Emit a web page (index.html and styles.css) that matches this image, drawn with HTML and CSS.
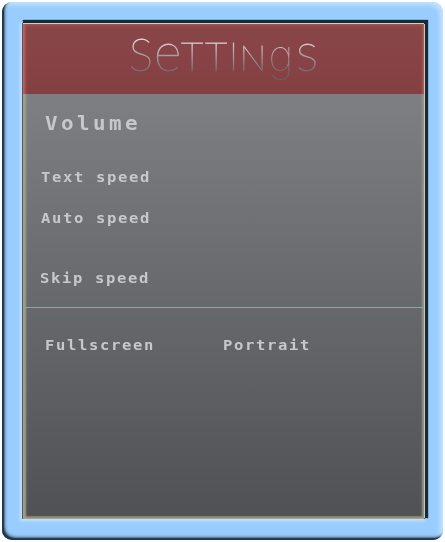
FILE: index.html
```html
<!DOCTYPE html>
<html lang="en">
<head>
<meta charset="utf-8">
<title>Settings</title>
<link rel="stylesheet" href="styles.css">
</head>
<body>
<main class="frame">
  <section class="panel">
    <header class="header">
      <h1 class="title" aria-label="Settings"><span class="glyph cap">S</span><span class="glyph tall">e</span><span class="glyph small">T</span><span class="glyph small">T</span><span class="glyph stem">I</span><span class="glyph small">N</span><span class="glyph tail">g</span><span class="glyph ess">s</span></h1>
    </header>
    <div class="sliders">
      <h2 class="volume">Volume</h2>
      <p class="label text-speed">Text speed</p>
      <p class="label auto-speed">Auto speed</p>
      <p class="label skip-speed">Skip speed</p>
    </div>
    <div class="modes">
      <p class="label">Fullscreen</p>
      <p class="label">Portrait</p>
    </div>
  </section>
</main>
</body>
</html>
```

FILE: styles.css
```css
* { box-sizing: border-box; }
body { margin: 0; background: #fff; overflow: hidden; }
h1, h2, p { margin: 0; }

.frame {
  width: 441px;
  height: 538px;
  margin: 2px;
  padding: 22px 19px 21px 21px;
  border-radius: 10px;
  background: #99ccff;
  box-shadow:
    inset 2px -2px 1px #203849,
    inset 3px -3px 3px #49677f,
    inset -3px 3px 4px #c4e2ff;
}

.panel {
  display: flex;
  flex-direction: column;
  width: 401px;
  height: 494px;
  background: linear-gradient(#86888b 0, #7e7f83 70px, #505154 100%);
  box-shadow:
    inset 3px 0 2px #a09f88,
    inset -2px 0 2px #96958a,
    inset 0 -2px 1px #85826a,
    0 -1px 0 #d0cfbc,
    1px 0 0 #c9c8b3,
    0 1px 0 #aaa685,
    2px -2px 1px 2px #162a37,
    0 0 0 1px #536777,
    -1px 1px 3px 2px #c5e1fb;
}

.header {
  height: 70px;
  background:
    linear-gradient(90deg, #cf6257, transparent 4px, transparent 398px, #b65d5a),
    linear-gradient(#a8504f, #894648 3px, #843f41);
}

.title {
  display: flex;
  align-items: baseline;
  height: 61px;
  width: 210px;
  margin-left: 105px;
  color: transparent;
  background: linear-gradient(#eee6e7 12px, #cbbdbe 22px, #77696b 47px, #655b5d 60px);
  background-clip: text;
  -webkit-background-clip: text;
  font: 100 46px/53px Lato, "Open Sans", sans-serif;
  -webkit-text-stroke: 0.8px transparent;
}

.glyph { display: block; width: 24px; text-align: center; line-height: 53px; }
.cap { width: 26px; font-size: 46px; }
.tall { width: 26px; font-size: 53px; }
.small { font-size: 39px; }
.stem { width: 11px; font-size: 39px; }
.stem + .small { width: 28px; font-size: 36px; }
.tail { width: 28px; font-family: Inter, sans-serif; font-size: 43px; -webkit-text-stroke: 0; }
.ess { width: 24px; font-size: 53px; }

.sliders {
  height: 214px;
  margin: 0 1px 0 2px;
  padding-top: 17px;
  border-bottom: 1px solid #88ab9d;
}

.volume, .label {
  width: fit-content;
  color: #c8c8ca;
  font-family: "DejaVu Sans Mono", monospace;
  font-weight: bold;
  white-space: pre;
  transform-origin: left;
}
.volume { margin-left: 20px; font-size: 19px; line-height: 24px; letter-spacing: 3.1px; transform: scaleX(1.1); }
.label { font-size: 13.5px; line-height: 16px; letter-spacing: 1.44px; transform: scaleX(1.15); }
.text-speed { margin: 34px 0 0 16px; }
.auto-speed { margin: 25px 0 0 16px; }
.skip-speed { margin: 44px 0 0 15px; }

.modes {
  display: grid;
  grid-template-columns: 178px 1fr;
  padding: 29px 0 0 22px;
}
```
